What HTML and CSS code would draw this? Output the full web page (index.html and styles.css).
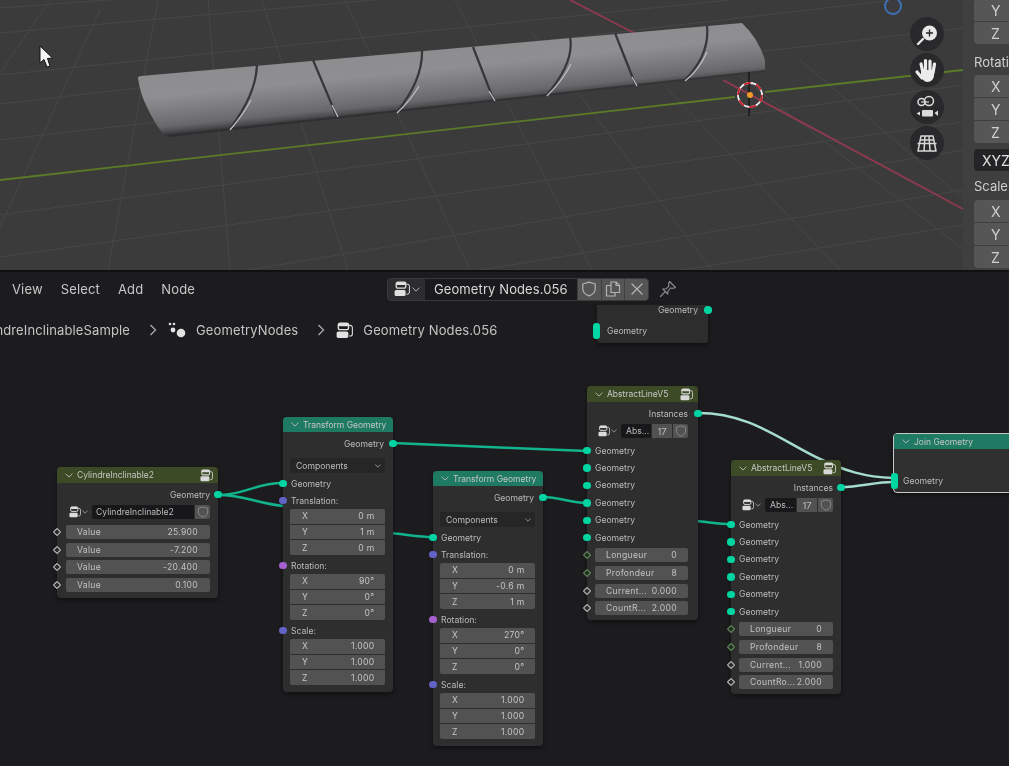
FILE: index.html
```html
<!DOCTYPE html>
<html lang="en">
<head>
<meta charset="utf-8">
<title>Geometry Nodes</title>
<link rel="stylesheet" href="styles.css">
</head>
<body>
<svg class="defs" width="0" height="0" aria-hidden="true">
  <symbol id="i-group" viewBox="0 0 16 16">
    <rect x="2.2" y="1.2" width="9.6" height="6" rx="1.6" fill="none" stroke="currentColor" stroke-width="1.3"/>
    <rect x="2.2" y="1.2" width="9.6" height="2.8" rx="1.2" fill="currentColor"/>
    <rect x="0.6" y="9" width="11" height="6" rx="1.6" fill="currentColor"/>
    <path d="M12.4 3.2h1a2 2 0 0 1 2 2v6a2 2 0 0 1-2 2h-1" fill="none" stroke="currentColor" stroke-width="1"/>
  </symbol>
  <symbol id="i-shield" viewBox="0 0 16 16">
    <path d="M8 1.2 14.2 3v5c0 3.4-2.6 5.6-6.2 6.9C4.400 13.600 1.800 11.400 1.800 8V3Z" fill="none" stroke="currentColor" stroke-width="1.2" stroke-linejoin="round"/>
  </symbol>
  <symbol id="i-chev" viewBox="0 0 10 6">
    <path d="M1 1l4 4 4-4" fill="none" stroke="currentColor" stroke-width="1.200" stroke-linecap="round" stroke-linejoin="round"/>
  </symbol>
</svg>

<main class="app">
  <section class="viewport">
    <svg class="scene" viewBox="0 0 963 270" aria-hidden="true">
      <defs>
        <linearGradient id="cyl" gradientUnits="userSpaceOnUse" x1="444" y1="47" x2="450" y2="107">
          <stop offset="0" stop-color="#8d8d8f"/>
          <stop offset=".35" stop-color="#8f8f91"/>
          <stop offset=".65" stop-color="#79797c"/>
          <stop offset=".85" stop-color="#68686b"/>
          <stop offset=".93" stop-color="#505052"/>
          <stop offset="1" stop-color="#343436"/>
        </linearGradient>
      </defs>
      <g class="grid">
        <path d="M0 8 963-64M0 33 963-52M0 75 963-24M0 104 963-8M0 140 963 28M0 215 963 85M0 257 963 122M70 300 963 150M300 300 963 190M620 280 963 225"/>
        <path d="M50 0 0 73M100 10 0 227M158 0 108 270M208 0 230 270M262 0 348 270M345 0 470 270M455 0 592 270M530 30 712 270M640 60 840 270M700 45 990 270M800 60 1000 230"/>
      </g>
      <path class="axis-red" d="M570 0 640 36M723 80 963 209"/>
      <path class="axis-green" d="M0 180 735 97M765 92 963 70"/>
      <path class="cyl" d="M138 78Q138 76 141 76L742 23Q758 38 765 60V72L168 137Q165 137 163 134C150 116 140 96 138 78Z"/>
      <path class="cyl-edge" d="M168 136 765 71"/>
      <g class="groove-d">
        <path d="M257 65Q256 95 229 130M313 60 337 117M422 50Q423 80 396 113M473 47 494 101M570 37Q575 62 546 96M615 33 636 86M707 26Q710 55 684 81"/>
      </g>
      <g class="groove-l">
        <path d="M251 100Q243 115 230 130M332 105 338 117M419 86Q411 100 397 113M489 91 495 101M571 64Q563 80 547 96M632 77 637 86M707 52Q699 70 685 81"/>
      </g>
      <circle class="nav-ball" cx="893" cy="6" r="8"/>
      <path class="cross" d="M749 72V116"/>
      <circle class="cur-w" cx="750" cy="95" r="12"/>
      <circle class="cur-r" cx="750" cy="95" r="12"/>
      <circle class="cur-o" cx="750" cy="95" r="3"/>
      <g class="gizmo">
        <circle cx="927" cy="34" r="17"/>
        <circle cx="927" cy="70" r="17"/>
        <circle cx="927" cy="107" r="17"/>
        <circle cx="927" cy="143" r="17"/>
      </g>
      <g class="g-zoom">
        <circle cx="929.500" cy="33" r="7.500"/>
        <path class="g-zoom-h" d="M923 39 918 44"/>
        <path class="g-zoom-p" d="M926 33H933M929.500 29.500V36.500"/>
      </g>
      <g class="g-hand">
        <path d="M921 64 923 73M925.500 60.500V72M930 61V72M934.500 64 933 73"/>
        <path class="g-thumb" d="M917 72 922 78"/>
        <path class="g-palm" d="M921 70H934V75C934 79 931 82 927.500 82C924 82 922 79 921 75Z"/>
      </g>
      <g class="g-cam">
        <circle cx="921.500" cy="102" r="3.500"/>
        <circle cx="929" cy="101" r="4.500"/>
        <path d="M921 102H929"/>
        <rect class="g-cam-b" x="922" y="110" width="11" height="6.500" rx="1"/>
        <path class="g-cam-s" d="M920 111.500 916.500 113.500 920 115.500ZM934.500 113 938 110.500V116Z"/>
      </g>
      <path class="g-grid" d="M921 136H933L936 151H918ZM917.500 143.500H936.500M919.500 140H934.500M925 136 924 151M929 136 930 151"/>
      <path class="mouse" d="M40 46V63L44 59.500 47 67 50 66 47.500 58.500 52.500 58Z"/>
    </svg>
    <aside class="side">
      <div class="fgroup first"><div class="sfield">Y</div><div class="sfield">Z</div></div>
      <div class="slabel first">Rotation</div>
      <div class="fgroup"><div class="sfield">X</div><div class="sfield">Y</div><div class="sfield">Z</div></div>
      <div class="sfield dark">XYZ Euler</div>
      <div class="slabel">Scale:</div>
      <div class="fgroup"><div class="sfield">X</div><div class="sfield">Y</div><div class="sfield">Z</div></div>
    </aside>
  </section>

  <section class="editor">
    <header class="toolbar">
      <nav class="menu"><span>View</span><span>Select</span><span>Add</span><span>Node</span></nav>
      <div class="datablock">
        <div class="db-type"><svg class="ic16"><use href="#i-group"/></svg><svg class="ic-chev"><use href="#i-chev"/></svg></div>
        <div class="db-name">Geometry Nodes.056</div>
        <button class="db-btn"><svg class="ic16"><use href="#i-shield"/></svg></button>
        <button class="db-btn"><svg class="ic16" viewBox="0 0 16 16"><path d="M6 1H11L14.500 4.500V11.500H6ZM11 1V4.500H14.500M6 4.500H1.500V15H10V11.500" fill="none" stroke="currentColor" stroke-width="1.200" stroke-linejoin="round"/></svg></button>
        <button class="db-btn"><svg class="ic16" viewBox="0 0 16 16"><path d="M3 3 13 13M13 3 3 13" fill="none" stroke="currentColor" stroke-width="1.300" stroke-linecap="round"/></svg></button>
      </div>
      <svg class="pin" viewBox="0 0 18 18"><path d="M10.500 1.500 16.500 7.500 14.800 8.300 11.500 8 9 11 8.800 14 3.800 9 7 8.800 9.800 6.300 9.700 3.200ZM6 11.900 1.500 16.500" fill="none" stroke="currentColor" stroke-width="1.100" stroke-linejoin="round" stroke-linecap="round"/></svg>
    </header>
    <div class="crumbs">
      <div class="crumb-clip"><span>CylindreInclinableSample</span></div>
      <svg class="crumb-sep" viewBox="0 0 8 12"><path d="M1.500 1 6.500 6 1.500 11" fill="none" stroke="currentColor" stroke-width="1.200"/></svg>
      <svg class="crumb-ic mod" viewBox="0 0 18 16"><g fill="currentColor"><circle cx="2" cy="2" r="1.300"/><circle cx="6" cy="2" r="1.300"/><circle cx="5" cy="8" r="2.400"/><circle cx="13" cy="11" r="4.300"/></g></svg>
      <span class="crumb-t">GeometryNodes</span>
      <svg class="crumb-sep" viewBox="0 0 8 12"><path d="M1.500 1 6.500 6 1.500 11" fill="none" stroke="currentColor" stroke-width="1.200"/></svg>
      <svg class="crumb-ic grp"><use href="#i-group"/></svg>
      <span class="crumb-t">Geometry Nodes.056</span>
    </div>

    <svg class="wires" viewBox="0 272 1009 494" aria-hidden="true">
      <path class="w" d="M218 495C245 495 255 483 283 483"/>
      <path class="w" d="M218 495C245 495 255 503 283 506"/>
      <path class="w" d="M390 533C410 535 420 537 433 537"/>
      <path class="w" d="M393 443 587 451"/>
      <path class="w" d="M543 497C560 497 570 503 587 503"/>
      <path class="w" d="M690 521C705 521 715 524 731 524"/>
      <path class="wp" d="M698 413C750 413 780 440 820 459C845 471 865 477 893 478"/>
      <path class="wp" d="M841 487C860 487 875 482 893 482"/>
    </svg>

    <article class="node n-out">
      <div class="row right r-out"><span>Geometry</span><i class="sock s-geo at-r"></i></div>
      <div class="row r-in"><i class="sock s-bar at-l"></i><span>Geometry</span></div>
    </article>

    <article class="node n-cyl">
      <div class="nh green"><svg class="ic-chev"><use href="#i-chev"/></svg><span class="nh-t">CylindreInclinable2</span><svg class="nh-i"><use href="#i-group"/></svg></div>
      <div class="row right mt3"><span>Geometry</span><i class="sock s-geo at-r"></i></div>
      <div class="sel mt2">
        <div class="sel-i"><svg class="ic12"><use href="#i-group"/></svg><svg class="ic-chev sm"><use href="#i-chev"/></svg></div>
        <div class="sel-n">CylindreInclinable2</div>
        <div class="sel-b"><svg class="ic12"><use href="#i-shield"/></svg></div>
      </div>
      <div class="vals mt6">
        <div class="val"><i class="sock s-val at-l"></i><span>Value</span><span>25.900</span></div>
        <div class="val"><i class="sock s-val at-l"></i><span>Value</span><span>-7.200</span></div>
        <div class="val"><i class="sock s-val at-l"></i><span>Value</span><span>-20.400</span></div>
        <div class="val"><i class="sock s-val at-l"></i><span>Value</span><span>0.100</span></div>
      </div>
    </article>

    <article class="node tf n-tf1">
      <div class="nh teal"><svg class="ic-chev"><use href="#i-chev"/></svg><span class="nh-t">Transform Geometry</span></div>
      <div class="row right mt3"><span>Geometry</span><i class="sock s-geo at-r"></i></div>
      <div class="drop"><span>Components</span><svg class="ic-chev sm"><use href="#i-chev"/></svg></div>
      <div class="row mt2"><i class="sock s-geo at-l"></i><span>Geometry</span></div>
      <div class="row"><i class="sock s-vec at-l"></i><span>Translation:</span></div>
      <div class="fields">
        <div class="fld"><span>X</span><span>0 m</span></div>
        <div class="fld"><span>Y</span><span>1 m</span></div>
        <div class="fld"><span>Z</span><span>0 m</span></div>
      </div>
      <div class="row mt2"><i class="sock s-rot at-l"></i><span>Rotation:</span></div>
      <div class="fields">
        <div class="fld"><span>X</span><span>90°</span></div>
        <div class="fld"><span>Y</span><span>0°</span></div>
        <div class="fld"><span>Z</span><span>0°</span></div>
      </div>
      <div class="row mt2"><i class="sock s-vec at-l"></i><span>Scale:</span></div>
      <div class="fields">
        <div class="fld"><span>X</span><span>1.000</span></div>
        <div class="fld"><span>Y</span><span>1.000</span></div>
        <div class="fld"><span>Z</span><span>1.000</span></div>
      </div>
    </article>

    <article class="node tf n-tf2">
      <div class="nh teal"><svg class="ic-chev"><use href="#i-chev"/></svg><span class="nh-t">Transform Geometry</span></div>
      <div class="row right mt3"><span>Geometry</span><i class="sock s-geo at-r"></i></div>
      <div class="drop"><span>Components</span><svg class="ic-chev sm"><use href="#i-chev"/></svg></div>
      <div class="row mt2"><i class="sock s-geo at-l"></i><span>Geometry</span></div>
      <div class="row"><i class="sock s-vec at-l"></i><span>Translation:</span></div>
      <div class="fields">
        <div class="fld"><span>X</span><span>0 m</span></div>
        <div class="fld"><span>Y</span><span>-0.6 m</span></div>
        <div class="fld"><span>Z</span><span>1 m</span></div>
      </div>
      <div class="row mt2"><i class="sock s-rot at-l"></i><span>Rotation:</span></div>
      <div class="fields">
        <div class="fld"><span>X</span><span>270°</span></div>
        <div class="fld"><span>Y</span><span>0°</span></div>
        <div class="fld"><span>Z</span><span>0°</span></div>
      </div>
      <div class="row mt2"><i class="sock s-vec at-l"></i><span>Scale:</span></div>
      <div class="fields">
        <div class="fld"><span>X</span><span>1.000</span></div>
        <div class="fld"><span>Y</span><span>1.000</span></div>
        <div class="fld"><span>Z</span><span>1.000</span></div>
      </div>
    </article>

    <article class="node al n-al1">
      <div class="nh green"><svg class="ic-chev"><use href="#i-chev"/></svg><span class="nh-t">AbstractLineV5</span><svg class="nh-i"><use href="#i-group"/></svg></div>
      <div class="row right mt3"><span>Instances</span><i class="sock s-geo at-r"></i></div>
      <div class="sel mt2">
        <div class="sel-i"><svg class="ic12"><use href="#i-group"/></svg><svg class="ic-chev sm"><use href="#i-chev"/></svg></div>
        <div class="sel-n">Abs...</div>
        <div class="sel-c">17</div>
        <div class="sel-b"><svg class="ic12"><use href="#i-shield"/></svg></div>
      </div>
      <div class="geos">
        <div class="row"><i class="sock s-geo at-l"></i><span>Geometry</span></div>
        <div class="row"><i class="sock s-geo at-l"></i><span>Geometry</span></div>
        <div class="row"><i class="sock s-geo at-l"></i><span>Geometry</span></div>
        <div class="row"><i class="sock s-geo at-l"></i><span>Geometry</span></div>
        <div class="row"><i class="sock s-geo at-l"></i><span>Geometry</span></div>
        <div class="row"><i class="sock s-geo at-l"></i><span>Geometry</span></div>
      </div>
      <div class="vals">
        <div class="val"><i class="sock s-int at-l"></i><span>Longueur</span><span>0</span></div>
        <div class="val"><i class="sock s-int at-l"></i><span>Profondeur</span><span>8</span></div>
        <div class="val"><i class="sock s-val at-l"></i><span>Current...</span><span>0.000</span></div>
        <div class="val"><i class="sock s-val at-l"></i><span>CountR...</span><span>2.000</span></div>
      </div>
    </article>

    <article class="node al n-al2">
      <div class="nh green"><svg class="ic-chev"><use href="#i-chev"/></svg><span class="nh-t">AbstractLineV5</span><svg class="nh-i"><use href="#i-group"/></svg></div>
      <div class="row right mt3"><span>Instances</span><i class="sock s-geo at-r"></i></div>
      <div class="sel mt2">
        <div class="sel-i"><svg class="ic12"><use href="#i-group"/></svg><svg class="ic-chev sm"><use href="#i-chev"/></svg></div>
        <div class="sel-n">Abs...</div>
        <div class="sel-c">17</div>
        <div class="sel-b"><svg class="ic12"><use href="#i-shield"/></svg></div>
      </div>
      <div class="geos">
        <div class="row"><i class="sock s-geo at-l"></i><span>Geometry</span></div>
        <div class="row"><i class="sock s-geo at-l"></i><span>Geometry</span></div>
        <div class="row"><i class="sock s-geo at-l"></i><span>Geometry</span></div>
        <div class="row"><i class="sock s-geo at-l"></i><span>Geometry</span></div>
        <div class="row"><i class="sock s-geo at-l"></i><span>Geometry</span></div>
        <div class="row"><i class="sock s-geo at-l"></i><span>Geometry</span></div>
      </div>
      <div class="vals">
        <div class="val"><i class="sock s-int at-l"></i><span>Longueur</span><span>0</span></div>
        <div class="val"><i class="sock s-int at-l"></i><span>Profondeur</span><span>8</span></div>
        <div class="val"><i class="sock s-val at-l"></i><span>Current...</span><span>1.000</span></div>
        <div class="val"><i class="sock s-val at-l"></i><span>CountRo...</span><span>2.000</span></div>
      </div>
    </article>

    <article class="node n-join">
      <div class="nh teal"><svg class="ic-chev"><use href="#i-chev"/></svg><span class="nh-t">Join Geometry</span></div>
      <div class="row join-row"><i class="sock s-bar at-l"></i><span>Geometry</span></div>
    </article>
  </section>
</main>
</body>
</html>
```

FILE: styles.css
```css
* { box-sizing: border-box; }
html, body { margin: 0; padding: 0; background: #1c1c1f; }
body {
  width: 1009px;
  height: 766px;
  overflow: hidden;
  font-family: Inter, "Noto Sans", "Liberation Sans", sans-serif;
}
.defs { position: absolute; }
.app { display: flex; flex-direction: column; width: 1009px; height: 766px; filter: blur(0.5px); }

/* 3D viewport */
.viewport { display: flex; height: 270px; flex: none; background: #3b3b3c; overflow: hidden; }
.scene { width: 963px; height: 270px; flex: none; display: block; overflow: hidden; }
.grid path { fill: none; stroke: #474748; stroke-width: 1; }
.axis-red { fill: none; stroke: #8f3a4e; stroke-width: 1.800; }
.axis-green { fill: none; stroke: #5b7a27; stroke-width: 1.800; }
.cyl { fill: url(#cyl); }
.cyl-edge { fill: none; stroke: #2e2e30; stroke-width: 2; opacity: .75; }
.groove-d path { fill: none; stroke: #37373a; stroke-width: 2.200; }
.groove-l path { fill: none; stroke: #bebec0; stroke-width: 1.300; }
.nav-ball { fill: #3c3c3e; stroke: #3d70b5; stroke-width: 2; }
.cross { stroke: #141414; stroke-width: 1.300; fill: none; }
.cur-w { fill: none; stroke: #eee; stroke-width: 1.800; }
.cur-r { fill: none; stroke: #c81f2a; stroke-width: 1.800; stroke-dasharray: 7 5.500; }
.cur-o { fill: #f09a2a; }
.gizmo circle { fill: #29292b; }
.g-zoom circle { fill: #e8e8e8; }
.g-zoom-h { stroke: #e8e8e8; stroke-width: 2.400; stroke-linecap: round; fill: none; }
.g-zoom-p { stroke: #222; stroke-width: 1.300; fill: none; }
.g-hand path { stroke: #ececec; stroke-width: 3.200; stroke-linecap: round; fill: none; }
.g-hand .g-palm { fill: #ececec; stroke: none; }
.g-cam circle { fill: none; stroke: #dcdcdc; stroke-width: 1.500; }
.g-cam path { stroke: #dcdcdc; stroke-width: 1.200; fill: none; }
.g-cam .g-cam-b { fill: #dcdcdc; }
.g-cam .g-cam-s { fill: #dcdcdc; stroke: none; }
.g-grid { fill: none; stroke: #d8d8d8; stroke-width: 1.500; stroke-linejoin: round; }
.mouse { fill: #f4f4f4; stroke: #111; stroke-width: 1; stroke-linejoin: round; }

.side {
  flex: none;
  width: 46px;
  background: #3f3f40;
  padding-left: 11px;
  display: flex;
  flex-direction: column;
  overflow: hidden;
  font-size: 14px;
  color: #cfcfcf;
}
.fgroup { display: flex; flex-direction: column; gap: 1px; width: 60px; flex: none; }
.fgroup.first { margin-top: -1px; }
.sfield { height: 22px; background: #565657; display: flex; align-items: center; padding-left: 17px; white-space: nowrap; border-radius: 1px; flex: none; }
.fgroup .sfield:first-child { border-radius: 4px 0 0 0; }
.fgroup .sfield:last-child { border-radius: 0 0 0 4px; }
.sfield.dark { background: #242426; width: 60px; margin-top: 6px; padding-left: 8px; border-radius: 4px 0 0 4px; color: #e0e0e0; }
.slabel { height: 29px; flex: none; display: flex; align-items: flex-end; padding-bottom: 6px; white-space: nowrap; font-size: 13px; line-height: 16px; }
.slabel.first { height: 31px; padding-bottom: 5px; }

/* node editor */
.editor { position: relative; flex: 1; background: #1c1c1f; border-top: 2px solid #101012; overflow: hidden; color: #c4c4c4; }
.toolbar { display: flex; align-items: center; height: 34px; padding-left: 12px; }
.menu { display: flex; gap: 18px; font-size: 13px; letter-spacing: .15px; color: #c8c8c8; width: 183px; flex: none; }
.datablock {
  display: flex;
  margin-left: 192px;
  height: 23px;
  width: 262px;
  flex: none;
  background: #2d2d2f;
  border-radius: 4px;
  overflow: hidden;
  border: 1px solid #3a3a3c;
}
.db-type { width: 37px; display: flex; align-items: center; justify-content: center; gap: 2px; color: #e0e0e0; flex: none; }
.db-name { width: 152px; flex: none; background: #1a1a1c; color: #d8d8d8; font-size: 13px; letter-spacing: .1px; display: flex; align-items: center; padding-left: 9px; white-space: nowrap; }
.db-btn { flex: 1; background: #555556; border: 0; border-left: 1px solid #3f3f40; padding: 0; color: #b4b4b4; display: flex; align-items: center; justify-content: center; }
.ic16 { width: 16px; height: 16px; display: block; }
.ic12 { width: 12px; height: 12px; display: block; }
.ic-chev { width: 8px; height: 5px; display: block; flex: none; color: #b8b8b8; }
.ic-chev.sm { width: 6px; height: 4px; }
.pin { width: 18px; height: 18px; margin-left: 10px; color: #909092; flex: none; }

.crumbs { display: flex; align-items: center; height: 48px; font-size: 13px; letter-spacing: .12px; color: #c4c4c4; }
.crumb-clip { width: 130px; flex: none; overflow: hidden; display: flex; justify-content: flex-end; white-space: nowrap; }
.crumb-sep { width: 8px; height: 12px; flex: none; margin-left: 19px; color: #b0b0b0; }
.crumb-ic { flex: none; color: #e2e2e2; }
.crumb-ic.mod { width: 18px; height: 16px; margin-left: 11px; }
.crumb-ic.grp { width: 17px; height: 17px; margin-left: 11px; }
.crumb-t { margin-left: 10px; white-space: nowrap; flex: none; }

.wires { position: absolute; left: 0; top: 0; width: 1009px; height: 494px; }
.w { fill: none; stroke: #12b48e; stroke-width: 2.500; }
.wp { fill: none; stroke: #a5dccd; stroke-width: 2.500; }

.node {
  position: absolute;
  display: flex;
  flex-direction: column;
  background: #2e2e2f;
  border-radius: 4px;
  font-size: 8.600px;
  color: #bcbcbc;
  box-shadow: 0 2px 5px rgba(0,0,0,.45);
}
.nh {
  height: 15px;
  padding: 0 5px 0 8px;
  display: flex;
  align-items: center;
  gap: 4px;
  border-radius: 4px 4px 0 0;
  flex: none;
}
.nh.green { background: #3c4a25; }
.nh.teal { background: #1e7a63; }
.nh-t { flex: 1; white-space: nowrap; overflow: hidden; color: #c6c6c6; font-size: 8.500px; }
.nh-i { width: 13px; height: 13px; color: #d8d8d8; flex: none; }
.row { position: relative; height: 17px; display: flex; align-items: center; flex: none; white-space: nowrap; }
.row.right { justify-content: flex-end; }
.mt2 { margin-top: 2px; }
.mt3 { margin-top: 3px; }
.mt6 { margin-top: 6px; }

.sock { position: absolute; display: block; top: 50%; width: 7.500px; height: 7.500px; border-radius: 50%; margin-top: -3.750px; }
.s-geo { background: #00d4a2; }
.s-vec { background: #6363c7; }
.s-rot { background: #a55fd0; }
.s-bar { width: 7px; height: 16px; margin-top: -8px; border-radius: 3px; background: #00d6a3; }
.s-val, .s-int {
  width: 6px; height: 6px; margin-top: -3px; border-radius: 1px;
  transform: rotate(45deg);
  background: #2a2a2b;
  border: 1.300px solid #c8c8c8;
}
.s-int { border-color: #5d9a55; }

.n-out { left: 597px; top: 33px; width: 111px; height: 38px; background: #2d2d2e; border-radius: 0 0 3px 3px; padding: 0 10px; }
.r-out { height: 10px; }
.r-in { margin-top: 10px; height: 12px; }
.n-out .at-r { right: -13.750px; }
.n-out .at-l { left: -14px; }

.n-cyl { left: 57px; top: 195px; width: 161px; padding-bottom: 6px; }
.n-cyl > .row, .n-cyl > .sel, .n-cyl > .vals { margin-left: 9px; margin-right: 8px; }
.n-cyl .nh { height: 16px; }
.n-cyl .at-r { right: -11.750px; }
.n-cyl .s-val { left: -12px; }

.tf { width: 110px; height: 275px; }
.tf > .row, .tf > .drop, .tf > .fields { margin-left: 7px; margin-right: 8px; }
.n-tf1 { left: 283px; top: 145px; }
.n-tf2 { left: 433px; top: 199px; }
.tf .at-l { left: -10.750px; }
.tf .at-r { right: -11.750px; }
.tf .row { padding-left: 1px; }
.tf .row.right { padding-right: 1px; }

.drop {
  height: 15px; margin-top: 6px; flex: none;
  display: flex; align-items: center; justify-content: space-between;
  padding: 0 4px 0 6px;
  background: #262627;
  border-radius: 2px;
}
.fields { display: grid; grid-template-rows: repeat(3, 1fr); gap: 1px; height: 46px; flex: none; }
.fld {
  background: #525253;
  display: flex; align-items: center; justify-content: space-between;
  padding: 0 10.500px 0 12px;
  letter-spacing: .3px;
  color: #c6c6c6;
}
.fld:first-child { border-radius: 2px 2px 0 0; }
.fld:last-child { border-radius: 0 0 2px 2px; }

.sel { display: flex; height: 14px; flex: none; gap: 1px; }
.sel-i { display: flex; align-items: center; gap: 1px; padding-left: 3px; width: 25px; flex: none; color: #dcdcdc; }
.sel-n { flex: 1; background: #18181a; display: flex; align-items: center; padding-left: 5px; white-space: nowrap; overflow: hidden; border-radius: 2px 0 0 2px; }
.sel-c { width: 20px; flex: none; background: #525253; display: flex; align-items: center; justify-content: center; font-size: 9.500px; }
.sel-b { width: 15px; flex: none; background: #525253; display: flex; align-items: center; justify-content: center; color: #8c8c8c; border-radius: 0 2px 2px 0; }

.vals { display: grid; grid-auto-rows: 14px; row-gap: 3.600px; flex: none; }
.val {
  position: relative;
  background: #525253;
  border-radius: 2px;
  display: flex; align-items: center; justify-content: space-between;
  padding: 0 12px 0 11px;
  letter-spacing: .3px;
  color: #c2c2c2;
  white-space: nowrap;
}
.n-cyl .sel-n { padding-left: 4px; }

.al { width: 111px; height: 234px; }
.al > .row, .al > .sel, .al > .geos, .al > .vals { margin-left: 8px; margin-right: 10px; }
.n-al1 { left: 587px; top: 114px; }
.n-al2 { left: 731px; top: 188px; width: 110px; }
.n-al2 > .row, .n-al2 > .sel, .n-al2 > .geos, .n-al2 > .vals { margin-right: 8px; }
.al .nh { height: 16px; }
.al .at-l { left: -11.750px; }
.n-al1 .at-r { right: -13.750px; }
.n-al2 .at-r { right: -11.750px; }
.al .s-val, .al .s-int { left: -11px; }
.al .val { padding: 0 11px; }
.al .geos { display: grid; grid-auto-rows: 17.400px; margin-top: 4px; margin-bottom: 2px; flex: none; }
.geos .row { height: 17.400px; }

.n-join {
  left: 893px; top: 161px; width: 140px; height: 60px;
  background: #303031;
  border: 1.500px solid #c8c8c8;
}
.n-join .nh { height: 15px; border-radius: 2px 2px 0 0; }
.join-row { margin: 23px 0 0 8px; padding-left: 1px; }
.n-join .at-l { left: -11.500px; }
```
